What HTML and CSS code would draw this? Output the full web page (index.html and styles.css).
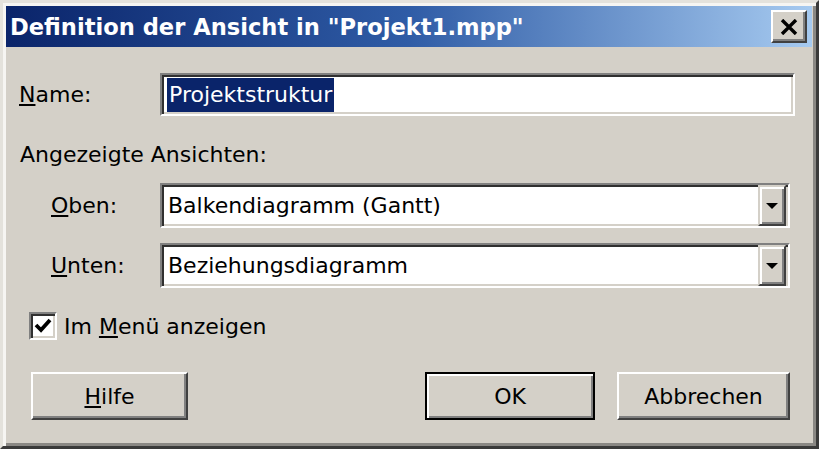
FILE: index.html
```html
<!DOCTYPE html>
<html lang="de">
<head>
    <meta charset="UTF-8">
    <title>Definition der Ansicht</title>
    <link rel="stylesheet" href="styles.css">
</head>
<body>
    <div class="window">
        <div class="titlebar">
            <span class="title">Definition der Ansicht in "Projekt1.mpp"</span>
            <button class="close">
                <svg width="18" height="16" viewBox="0 0 18 16"><path d="M2 1 L16 15 M16 1 L2 15" stroke="#000" stroke-width="3.4"/></svg>
            </button>
        </div>
        <div class="content">
            <div class="row name-row">
                <label class="lbl"><u>N</u>ame:</label>
                <div class="field text-field"><span class="sel">Projektstruktur</span></div>
            </div>
            <div class="group-title">Angezeigte Ansichten:</div>
            <div class="row combo-row">
                <label class="lbl indent"><u>O</u>ben:</label>
                <div class="field combo">
                    <span class="value">Balkendiagramm (Gantt)</span>
                    <span class="drop"><i class="arrow"></i></span>
                </div>
            </div>
            <div class="row combo-row second">
                <label class="lbl indent"><u>U</u>nten:</label>
                <div class="field combo">
                    <span class="value">Beziehungsdiagramm</span>
                    <span class="drop"><i class="arrow"></i></span>
                </div>
            </div>
            <div class="check-row">
                <span class="checkbox">
                    <svg width="18" height="16" viewBox="0 0 18 16"><path d="M2 7 L7 12 L16 2" fill="none" stroke="#000" stroke-width="3.8"/></svg>
                </span>
                <span>Im <u>M</u>enü anzeigen</span>
            </div>
            <div class="buttons">
                <button class="btn help"><u>H</u>ilfe</button>
                <button class="btn ok">OK</button>
                <button class="btn cancel">Abbrechen</button>
            </div>
        </div>
    </div>
</body>
</html>
```

FILE: styles.css
```css
body {
    margin: 0;
    background: #d4d0c8;
    font-family: "DejaVu Sans", Verdana, sans-serif;
    font-size: 22px;
    color: #000;
}
.window {
    width: 819px;
    height: 449px;
    box-sizing: border-box;
    background: #d4d0c8;
    border: 3px solid;
    border-color: #e4e2dc #3a3a3a #3a3a3a #e4e2dc;
    box-shadow: inset 3px 3px 0 #f6f5f2, inset -3px -3px 0 #8a8884;
    padding: 3px 4px 0 3px;
}
.titlebar {
    height: 41px;
    background: linear-gradient(to right, #0a246a 0%, #2f5ca6 50%, #a6caf0 100%);
    display: flex;
    align-items: center;
    justify-content: space-between;
    padding: 0 5px 0 4px;
}
.title {
    color: #fff;
    font-weight: bold;
    font-size: 22.6px;
}
.close {
    width: 36px;
    height: 33px;
    padding: 0;
    background: #d4d0c8;
    border: 2px solid;
    border-color: #fff #404040 #404040 #fff;
    box-shadow: inset -2px -2px 0 #808080;
    display: flex;
    align-items: center;
    justify-content: center;
}
.content {
    padding: 26px 17px 0 11px;
}
.row {
    display: flex;
    align-items: center;
}
.lbl {
    width: 143px;
    flex: none;
    padding-left: 2px;
    box-sizing: border-box;
}
.lbl.indent {
    padding-left: 34px;
}
.field {
    flex: 1;
    box-sizing: border-box;
    background: #fff;
    border: 2px solid;
    border-color: #808080 #fff #fff #808080;
    box-shadow: inset 2px 2px 0 #303030, inset -2px -2px 0 #d4d0c8;
    display: flex;
    align-items: center;
}
.text-field {
    height: 43px;
    padding-left: 5px;
}
.sel {
    background: #0a246a;
    color: #fff;
    line-height: 34px;
    padding: 0 2px;
}
.group-title {
    margin-top: 26px;
    padding-left: 3px;
    line-height: 26px;
}
.combo-row {
    margin-top: 15px;
    margin-right: 5px;
}
.combo-row.second {
    margin-top: 15px;
}
.combo {
    height: 45px;
    padding: 0 2px 0 6px;
    justify-content: space-between;
}
.drop {
    width: 28px;
    height: 41px;
    box-sizing: border-box;
    background: #d4d0c8;
    border: 2px solid;
    border-color: #d4d0c8 #404040 #404040 #d4d0c8;
    box-shadow: inset 2px 2px 0 #fff, inset -2px -2px 0 #808080;
    display: flex;
    align-items: center;
    justify-content: center;
}
.arrow {
    width: 0;
    height: 0;
    border-left: 6px solid transparent;
    border-right: 6px solid transparent;
    border-top: 6px solid #000;
}
.check-row {
    margin-top: 24px;
    padding-left: 12px;
    display: flex;
    align-items: center;
    gap: 7px;
    height: 28px;
}
.checkbox {
    width: 28px;
    height: 28px;
    box-sizing: border-box;
    background: #fff;
    border: 2px solid;
    border-color: #808080 #fff #fff #808080;
    box-shadow: inset 2px 2px 0 #303030, inset -2px -2px 0 #d4d0c8;
    display: flex;
    align-items: center;
    justify-content: center;
}
.buttons {
    margin-top: 32px;
    display: flex;
    padding-left: 14px;
    padding-right: 5px;
}
.btn {
    height: 48px;
    font-family: inherit;
    font-size: 22px;
    color: #000;
    background: #d4d0c8;
    border: 2px solid;
    border-color: #fff #404040 #404040 #fff;
    box-shadow: inset -2px -2px 0 #808080;
    padding: 0;
}
.help {
    width: 157px;
}
.ok {
    width: 170px;
    margin-left: auto;
    border-color: #000;
    box-shadow: inset 2px 2px 0 #fff, inset -2px -2px 0 #808080;
}
.cancel {
    width: 173px;
    margin-left: 22px;
}
```
